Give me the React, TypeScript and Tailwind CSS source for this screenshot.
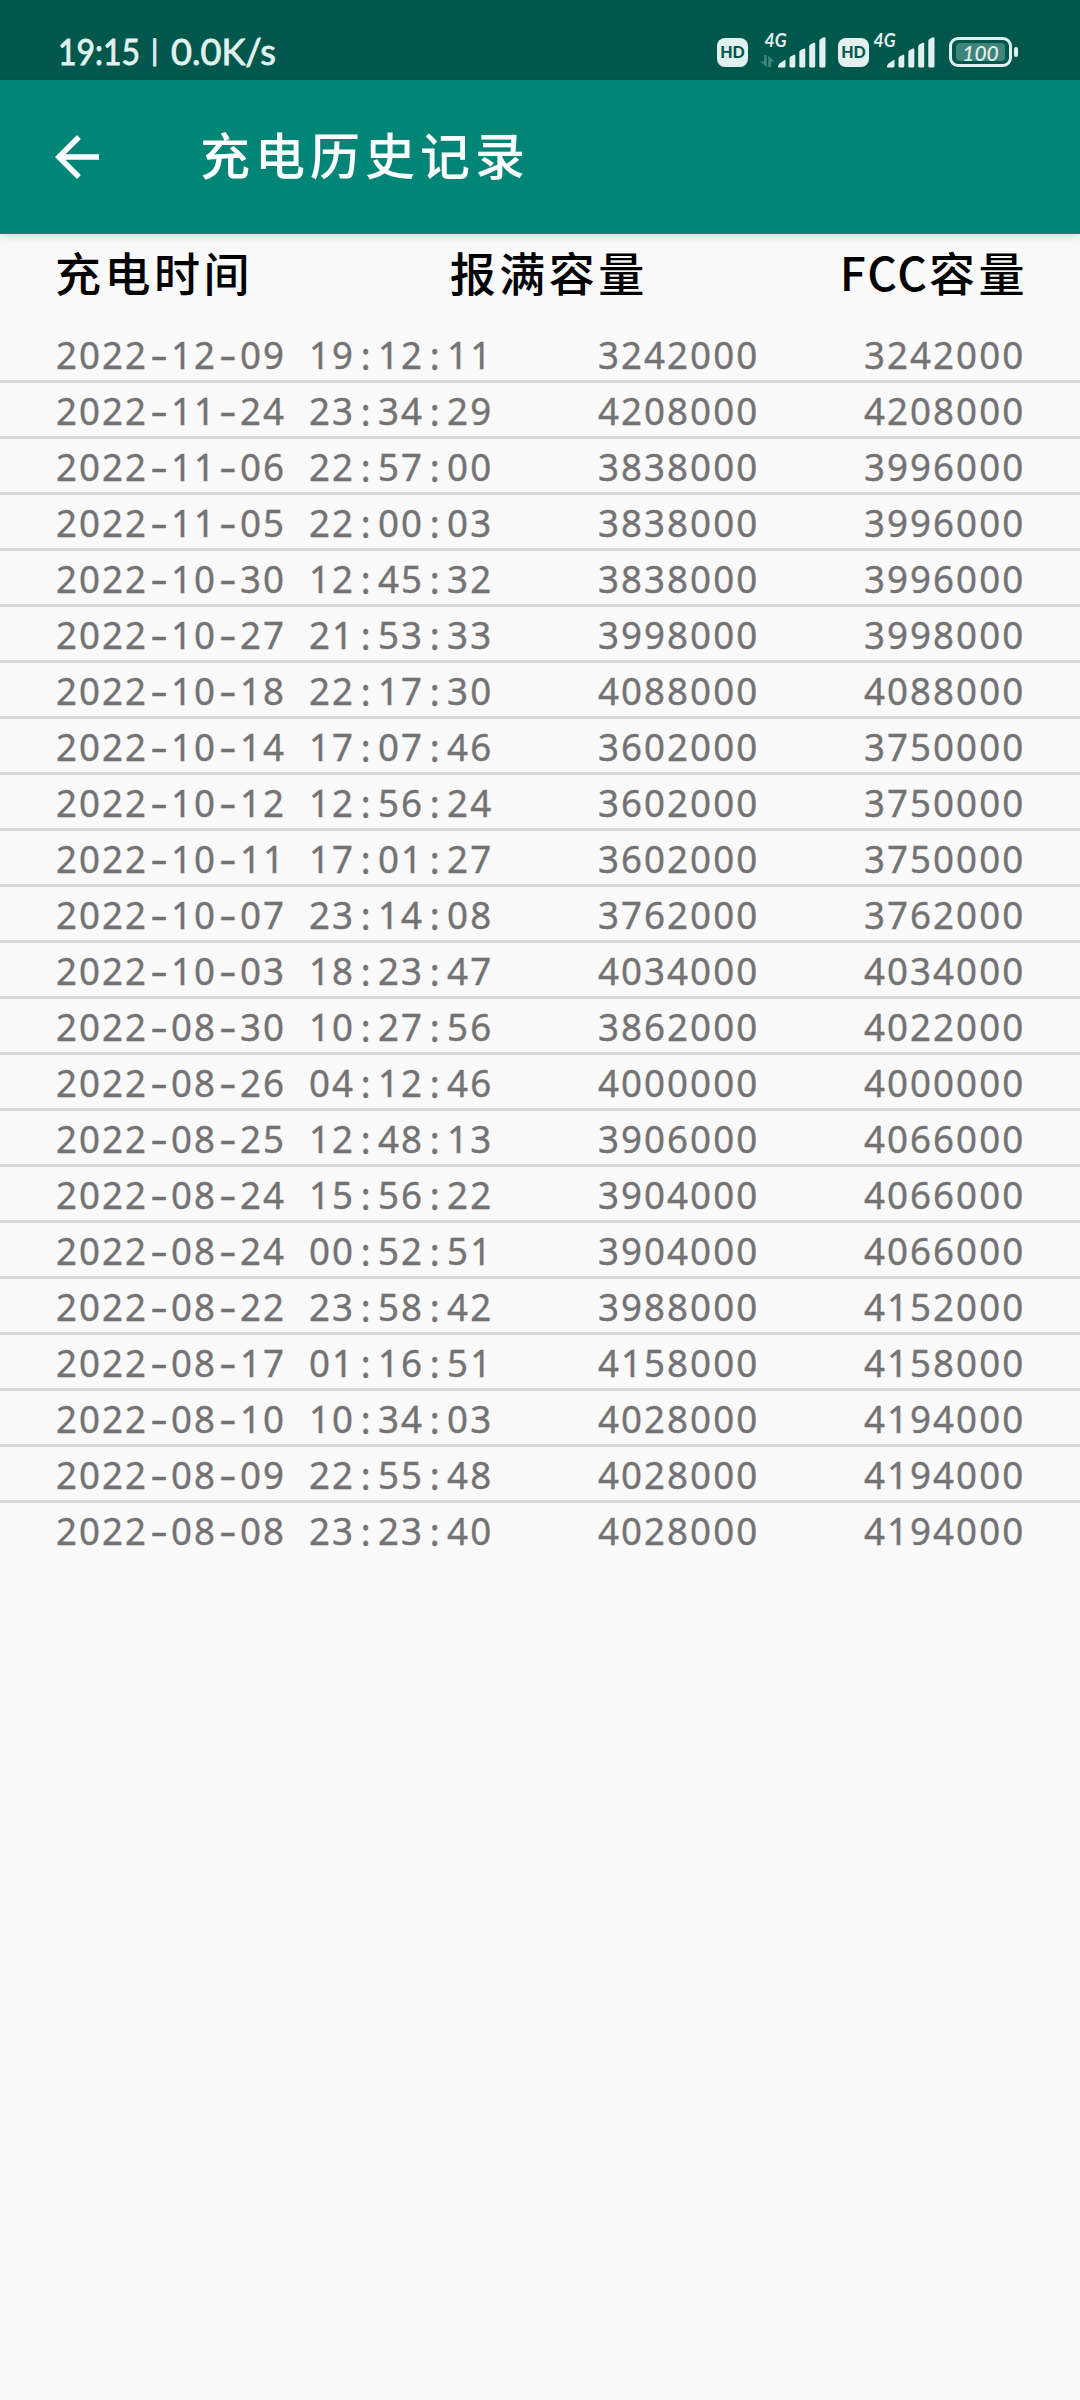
import { Fragment } from 'react';

const records = [
  { time: '2022-12-09 19:12:11', full: 3242000, fcc: 3242000 },
  { time: '2022-11-24 23:34:29', full: 4208000, fcc: 4208000 },
  { time: '2022-11-06 22:57:00', full: 3838000, fcc: 3996000 },
  { time: '2022-11-05 22:00:03', full: 3838000, fcc: 3996000 },
  { time: '2022-10-30 12:45:32', full: 3838000, fcc: 3996000 },
  { time: '2022-10-27 21:53:33', full: 3998000, fcc: 3998000 },
  { time: '2022-10-18 22:17:30', full: 4088000, fcc: 4088000 },
  { time: '2022-10-14 17:07:46', full: 3602000, fcc: 3750000 },
  { time: '2022-10-12 12:56:24', full: 3602000, fcc: 3750000 },
  { time: '2022-10-11 17:01:27', full: 3602000, fcc: 3750000 },
  { time: '2022-10-07 23:14:08', full: 3762000, fcc: 3762000 },
  { time: '2022-10-03 18:23:47', full: 4034000, fcc: 4034000 },
  { time: '2022-08-30 10:27:56', full: 3862000, fcc: 4022000 },
  { time: '2022-08-26 04:12:46', full: 4000000, fcc: 4000000 },
  { time: '2022-08-25 12:48:13', full: 3906000, fcc: 4066000 },
  { time: '2022-08-24 15:56:22', full: 3904000, fcc: 4066000 },
  { time: '2022-08-24 00:52:51', full: 3904000, fcc: 4066000 },
  { time: '2022-08-22 23:58:42', full: 3988000, fcc: 4152000 },
  { time: '2022-08-17 01:16:51', full: 4158000, fcc: 4158000 },
  { time: '2022-08-10 10:34:03', full: 4028000, fcc: 4194000 },
  { time: '2022-08-09 22:55:48', full: 4028000, fcc: 4194000 },
  { time: '2022-08-08 23:23:40', full: 4028000, fcc: 4194000 }
];

function HdBadge() {
  return (
    <div className="flex h-[29px] w-[31px] items-center justify-center rounded-[8px] bg-[#e2f1ef] font-['Lato',sans-serif] text-[16px] leading-none font-black text-[#00574b]">
      HD
    </div>
  );
}

function Signal({ active = false }: { active?: boolean }) {
  return (
    <svg width="66" height="38" viewBox="0 0 66 38" className="overflow-visible">
      {active && (
        <g fill="#3f8479">
          <path d="M4 25h2.800v12L0 31.500h4z" />
          <path d="M8.200 37V25.500l6.300 6h-3.300v5.500z" />
        </g>
      )}
      <text
        x="4.5"
        y="17"
        fill="#e2f1ef"
        fontSize="19"
        fontStyle="italic"
        fontWeight="700"
        textLength="22"
        lengthAdjust="spacingAndGlyphs"
        fontFamily="Lato, sans-serif">
        4G
      </text>
      <g fill="#e2f1ef">
        <path d="M18 37q0-3 3-4.5l4-2.7q.5 0 .5 1V36q0 1.500-1.500 1.500H19q-1 0-1-.5z" />
        <path d="M29.500 28.500q0-1.500 1.500-2.200l3-1.500q1.300-.5 1.300 1V36q0 1.500-1.500 1.500H31q-1.500 0-1.500-1.500z" />
        <path d="M39.300 22.300q0-1.500 1.500-2.200l3-1.500q1.500-.5 1.500 1V36q0 1.500-1.500 1.500h-3q-1.500 0-1.500-1.500z" />
        <path d="M49.200 16.500q0-1.500 1.500-2.200l3-1.500q1.500-.5 1.500 1V36q0 1.500-1.500 1.500h-3q-1.500 0-1.500-1.500z" />
        <path d="M59.300 11q0-1.500 1.500-2.200l3-1.500q1.700-.5 1.700 1V36q0 1.500-1.500 1.500h-3.200q-1.500 0-1.500-1.500z" />
      </g>
    </svg>
  );
}

function Battery() {
  return (
    <div className="flex items-center gap-[2px]">
      <div className="flex h-[30px] w-[63px] items-center justify-center rounded-[9px] border-[3px] border-[#e2f1ef]">
        <div className="flex h-[18px] w-[49px] items-center justify-center rounded-[4px] bg-[#3f8479] font-['Lato',sans-serif] text-[21px] leading-none font-medium text-[#e2f1ef] italic">
          100
        </div>
      </div>
      <div className="h-[10px] w-[4px] rounded-[2px] bg-[#e2f1ef]" />
    </div>
  );
}

function StatusBar() {
  return (
    <div className="flex h-[80px] bg-[#00574b] pt-[30px] pr-[62px] pl-[57px]">
      <svg
        width="220"
        height="44"
        viewBox="0 0 220 44"
        className="overflow-visible"
        fill="#e2f1ef"
        stroke="#e2f1ef"
        strokeWidth="0.9"
        fontFamily="Lato, sans-serif"
        fontSize="37">
        <text x="1" y="35" textLength="82" lengthAdjust="spacingAndGlyphs">
          19:15
        </text>
        <text x="94" y="31" fontSize="29">
          |
        </text>
        <text x="114" y="35" textLength="105" lengthAdjust="spacingAndGlyphs">
          0.0K/s
        </text>
      </svg>
      <div className="ml-auto flex h-[38px] items-center">
        <div className="mt-[6px]">
          <HdBadge />
        </div>
        <div className="ml-[12px]">
          <Signal active />
        </div>
        <div className="mt-[6px] ml-[12px]">
          <HdBadge />
        </div>
        <Signal />
        <div className="mt-[6px] ml-[14px]">
          <Battery />
        </div>
      </div>
    </div>
  );
}

// digits share one advance, so only the separators need a fixed cell
function Mono({ value }: { value: string }) {
  return (
    <span className="inline-block origin-left scale-x-[0.94] pl-[1px] tracking-[2.200px] whitespace-nowrap [-webkit-text-stroke:0.4px_#737373]">
      {value.split(/([-: ])/).map((part, i) =>
        /^[-: ]$/.test(part) ? (
          <span key={i} className="inline-block w-[24.400px] text-center tracking-normal whitespace-pre">
            {part === '-' ? (
              <span className="inline-block origin-[60%_50%] scale-x-[1.450]">-</span>
            ) : (
              <span className="inline-block -translate-x-[1px] translate-y-[1px]">{part}</span>
            )}
          </span>
        ) : (
          <Fragment key={i}>{part}</Fragment>
        )
      )}
    </span>
  );
}

function App() {
  return (
    <div className="h-[2400px] w-[1080px] overflow-hidden bg-[#fafafa] font-['Noto_Sans','Noto_Sans_CJK_SC',sans-serif]">
      <StatusBar />
      <div className="relative flex h-[154px] items-center bg-[#008577] pl-[55px] text-white shadow-[0_3px_8px_rgba(0,0,0,0.12)]">
        <svg width="44" height="44" viewBox="4 4 16 16" fill="currentColor">
          <path d="M20 11H7.830l5.590-5.590L12 4l-8 8 8 8 1.410-1.410L7.830 13H20v-2z" />
        </svg>
        <h1 className="mb-[8px] ml-[101px] font-['Noto_Sans_CJK_SC',sans-serif] text-[50px] leading-none font-medium tracking-[5px]">
          充电历史记录
        </h1>
      </div>
      <div className="flex h-[93px] justify-between px-[55px] pt-[11px] font-['Noto_Sans_CJK_SC',sans-serif] text-[46px] leading-[52px] font-medium tracking-[3.500px] text-black">
        <span>充电时间</span>
        <span className="pl-[5px]">报满容量</span>
        <span className="mr-[-3px]">
          <span className="tracking-[2px]">FCC</span>容量
        </span>
      </div>
      <div className="divide-y-[3px] divide-[#d9d9d9]">
        {records.map((record) => (
          <div
            key={record.time}
            className="flex h-[56px] justify-between px-[55px] text-[39px] leading-[54px] text-[#737373]">
            <div className="w-[439px]">
              <Mono value={record.time} />
            </div>
            <div className="w-[163px]">
              <Mono value={String(record.full)} />
            </div>
            <div className="w-[162px]">
              <Mono value={String(record.fcc)} />
            </div>
          </div>
        ))}
      </div>
    </div>
  );
}

export default App;
